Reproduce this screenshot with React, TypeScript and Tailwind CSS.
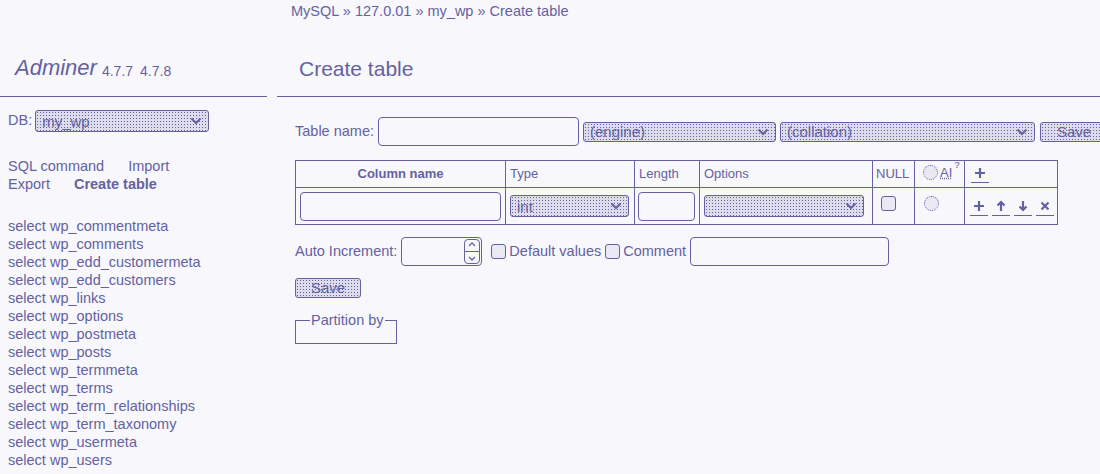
import React from 'react'

const tables = [
  'wp_commentmeta',
  'wp_comments',
  'wp_edd_customermeta',
  'wp_edd_customers',
  'wp_links',
  'wp_options',
  'wp_postmeta',
  'wp_posts',
  'wp_termmeta',
  'wp_terms',
  'wp_term_relationships',
  'wp_term_taxonomy',
  'wp_usermeta',
  'wp_users',
]

// dithered look of the native selects/buttons
const dither =
  'bg-[#dddcec] bg-[radial-gradient(#6461a0_0.7px,transparent_0.8px)] bg-[length:3px_3px]'

const Chevron = () => (
  <svg width="12" height="8" viewBox="0 0 12 8" className="shrink-0">
    <path d="M1.5 1.5 L6 6 L10.5 1.5" fill="none" stroke="#6461a0" strokeWidth="2" />
  </svg>
)

const FakeSelect = ({ label, className = '' }: { label: string; className?: string }) => (
  <div
    className={`shrink-0 flex items-center justify-between border border-[#6461a0] rounded-[3px] px-[6px] ${dither} ${className}`}
  >
    <span className="leading-none">{label}</span>
    <Chevron />
  </div>
)

const Check = ({ round = false }: { round?: boolean }) => (
  <span
    className={`inline-block shrink-0 w-[15px] h-[15px] border border-[#6461a0] ${
      round ? 'rounded-full border-dotted' : 'rounded-[3px]'
    } bg-[#e9e8f3]`}
  />
)

const icons: Record<string, string> = {
  plus: 'M6 1 V11 M1 6 H11',
  up: 'M6 11 V2 M2.5 5.5 L6 2 L9.5 5.5',
  down: 'M6 1 V10 M2.5 6.5 L6 10 L9.5 6.5',
  x: 'M2.5 2.5 L9.5 9.5 M9.5 2.5 L2.5 9.5',
}

const ActionLink = ({ icon }: { icon: keyof typeof icons }) => (
  <span className="inline-flex justify-center w-[18px] pb-[3px] border-b border-[#6461a0]">
    <svg width="12" height="12" viewBox="0 0 12 12">
      <path d={icons[icon]} fill="none" stroke="#6461a0" strokeWidth="2.2" />
    </svg>
  </span>
)

export default function App() {
  return (
    <div className="min-h-[474px] bg-[#f8f8fc] text-[#6461a0] font-['Liberation_Sans',Arial,sans-serif] text-[14.5px] flex overflow-hidden">
      {/* Sidebar */}
      <aside className="w-[277px] shrink-0 pt-[55px]">
        <div className="pl-[15px] h-[42px] border-b border-[#6461a0] mr-[10px] flex items-start">
          <span className="italic text-[22px] leading-[26px]">Adminer</span>
          <span className="text-[14px] ml-[5px] mt-[6px]">4.7.7</span>
          <span className="text-[14px] ml-[7px] mt-[6px]">4.7.8</span>
        </div>
        <div className="pl-[8px] mt-[13px] flex items-center gap-[3px]">
          <span>DB:</span>
          <FakeSelect label="my_wp" className="w-[174px] h-[22px] text-[15px]" />
        </div>
        <div className="pl-[8px] mt-[25px] leading-[18px]">
          <div>
            <span>SQL command</span>
            <span className="ml-[24px]">Import</span>
          </div>
          <div>
            <span>Export</span>
            <span className="ml-[24px] font-bold">Create table</span>
          </div>
        </div>
        <ul className="pl-[8px] mt-[24px] leading-[18px]">
          {tables.map((t) => (
            <li key={t}>select {t}</li>
          ))}
        </ul>
      </aside>

      {/* Main */}
      <main className="flex-1 min-w-0">
        <div className="pl-[14px] pt-[2px] leading-[18px]">MySQL » 127.0.01 » my_wp » Create table</div>
        <h2 className="pl-[22px] mt-[36px] text-[21px] leading-[26px] h-[41px] border-b border-[#6461a0]">
          Create table
        </h2>

        <div className="pl-[18px] mt-[20px]">
          <div className="flex items-center whitespace-nowrap">
            <span>Table name:</span>
            <span className="shrink-0 ml-[4px] w-[201px] h-[29px] border border-[#6461a0] rounded-[4px] bg-[#f8f8fc]" />
            <FakeSelect label="(engine)" className="ml-[4px] w-[193px] h-[20px] text-[15px]" />
            <FakeSelect label="(collation)" className="ml-[4px] w-[255px] h-[20px] text-[15px]" />
            <span className={`shrink-0 ml-[5px] w-[70px] h-[20px] border border-[#6461a0] rounded-[3px] pl-[16px] text-[15px] leading-[18px] ${dither}`}>
              Save
            </span>
          </div>

          <table className="mt-[14px] border-collapse border border-[#6461a0] text-[13px]">
            <thead>
              <tr className="h-[27px]">
                <th className="w-[210px] border border-[#6461a0] font-bold text-center">Column name</th>
                <th className="w-[129px] border border-[#6461a0] font-normal text-left pl-[4px]">Type</th>
                <th className="w-[65px] border border-[#6461a0] font-normal text-left pl-[4px]">Length</th>
                <th className="w-[173px] border border-[#6461a0] font-normal text-left pl-[4px]">Options</th>
                <th className="w-[42px] border border-[#6461a0] font-normal text-left pl-[3px]">NULL</th>
                <th className="w-[50px] border border-[#6461a0] font-normal text-left pl-[8px]">
                  <span className="inline-flex items-center gap-[2px]">
                    <Check round />
                    <span className="underline decoration-dotted">AI</span>
                    <sup className="-mt-[6px]">?</sup>
                  </span>
                </th>
                <th className="w-[93px] border border-[#6461a0] font-normal text-left pl-[6px] pt-[2px]">
                  <ActionLink icon="plus" />
                </th>
              </tr>
            </thead>
            <tbody>
              <tr className="h-[37px]">
                <td className="border border-[#6461a0] px-[4px]">
                  <span className="block w-[201px] h-[29px] border border-[#6461a0] rounded-[4px]" />
                </td>
                <td className="border border-[#6461a0] px-[4px]">
                  <FakeSelect label="int" className="w-[119px] h-[22px] text-[15px]" />
                </td>
                <td className="border border-[#6461a0] px-[3px]">
                  <span className="block w-[57px] h-[29px] border border-[#6461a0] rounded-[4px]" />
                </td>
                <td className="border border-[#6461a0] px-[4px]">
                  <FakeSelect label="" className="w-[160px] h-[22px]" />
                </td>
                <td className="border border-[#6461a0] pl-[8px]">
                  <Check />
                </td>
                <td className="border border-[#6461a0] pl-[9px]">
                  <Check round />
                </td>
                <td className="border border-[#6461a0] pl-[5px] pt-[3px]">
                  <span className="inline-flex gap-[4px]">
                    <ActionLink icon="plus" />
                    <ActionLink icon="up" />
                    <ActionLink icon="down" />
                    <ActionLink icon="x" />
                  </span>
                </td>
              </tr>
            </tbody>
          </table>

          <div className="mt-[12px] flex items-center whitespace-nowrap">
            <span>Auto Increment:</span>
            <span className="shrink-0 ml-[4px] w-[81px] h-[29px] border border-[#6461a0] rounded-[4px] flex justify-end items-center pr-[1px]">
              <span className="flex flex-col w-[16px] h-[25px] border border-[#6461a0] rounded-[4px] items-center justify-around">
                <svg width="8" height="5" viewBox="0 0 8 5">
                  <path d="M1 4 L4 1 L7 4" fill="none" stroke="#6461a0" strokeWidth="1.3" />
                </svg>
                <span className="border-t border-[#6461a0] w-full" />
                <svg width="8" height="5" viewBox="0 0 8 5">
                  <path d="M1 1 L4 4 L7 1" fill="none" stroke="#6461a0" strokeWidth="1.3" />
                </svg>
              </span>
            </span>
            <span className="ml-[9px] flex items-center gap-[3px]">
              <Check />
              <span>Default values</span>
            </span>
            <span className="ml-[4px] flex items-center gap-[3px]">
              <Check />
              <span>Comment</span>
            </span>
            <span className="shrink-0 ml-[4px] w-[199px] h-[29px] border border-[#6461a0] rounded-[4px]" />
          </div>

          <div className={`mt-[12px] w-[66px] h-[20px] border border-[#6461a0] rounded-[3px] text-center text-[15px] leading-[18px] ${dither}`}>
            Save
          </div>

          <fieldset className="mt-[14px] w-[102px] h-[32px] border border-[#6461a0] px-[4px]">
            <legend className="ml-[10px] px-[1px] leading-[16px]">Partition by</legend>
          </fieldset>
        </div>
      </main>
    </div>
  )
}
